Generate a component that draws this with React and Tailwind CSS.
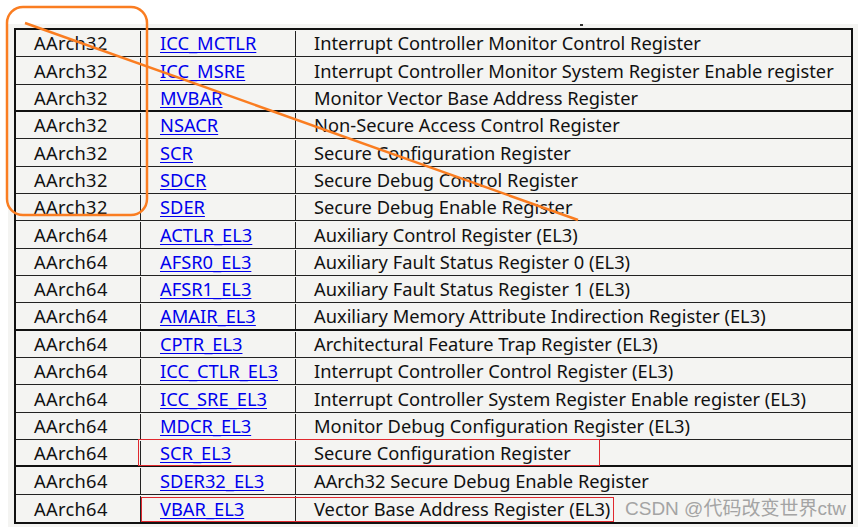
import React from "react";

const rows = [
  ["AArch32", "ICC_MCTLR", "Interrupt Controller Monitor Control Register"],
  ["AArch32", "ICC_MSRE", "Interrupt Controller Monitor System Register Enable register"],
  ["AArch32", "MVBAR", "Monitor Vector Base Address Register"],
  ["AArch32", "NSACR", "Non-Secure Access Control Register"],
  ["AArch32", "SCR", "Secure Configuration Register"],
  ["AArch32", "SDCR", "Secure Debug Control Register"],
  ["AArch32", "SDER", "Secure Debug Enable Register"],
  ["AArch64", "ACTLR_EL3", "Auxiliary Control Register (EL3)"],
  ["AArch64", "AFSR0_EL3", "Auxiliary Fault Status Register 0 (EL3)"],
  ["AArch64", "AFSR1_EL3", "Auxiliary Fault Status Register 1 (EL3)"],
  ["AArch64", "AMAIR_EL3", "Auxiliary Memory Attribute Indirection Register (EL3)"],
  ["AArch64", "CPTR_EL3", "Architectural Feature Trap Register (EL3)"],
  ["AArch64", "ICC_CTLR_EL3", "Interrupt Controller Control Register (EL3)"],
  ["AArch64", "ICC_SRE_EL3", "Interrupt Controller System Register Enable register (EL3)"],
  ["AArch64", "MDCR_EL3", "Monitor Debug Configuration Register (EL3)"],
  ["AArch64", "SCR_EL3", "Secure Configuration Register"],
  ["AArch64", "SDER32_EL3", "AArch32 Secure Debug Enable Register"],
  ["AArch64", "VBAR_EL3", "Vector Base Address Register (EL3)"],
];

const thick = new Set([2, 10, 15]);

export default function App() {
  const bounds = rows.map((_, i) => Math.round(28 + i * 27.33));
  bounds.push(520);
  return (
    <div
      className="relative w-[861px] h-[527px] bg-white overflow-hidden pl-[8px] pt-[24px]"
      style={{ fontFamily: '"Noto Sans", "Noto Sans CJK SC", sans-serif' }}
    >
      <div className="w-[850px] h-[503px] bg-[#f4f4f2] pl-[6px] pt-[4px]">
        <div className="w-[839px] border-2 border-[#111] flex flex-col">
          {rows.map((r, i) => {
            const h = bounds[i + 1] - bounds[i];
            const last = i === rows.length - 1;
            return (
              <div
                key={i}
                className={
                  "flex text-[18.3px] leading-none text-[#111] pt-[1px] " +
                  (last ? "" : thick.has(i) ? "border-b-2 border-[#111]" : "border-b border-[#222]")
                }
                style={{ height: h }}
              >
                <div className="w-[125px] shrink-0 border-r border-[#222] pl-[18px] flex items-center tracking-[0.3px]">
                  {r[0]}
                </div>
                <div className="w-[155px] shrink-0 border-r border-[#222] pl-[19px] flex items-center">
                  <span className="text-[#0000ee] underline underline-offset-2 decoration-1">{r[1]}</span>
                </div>
                <div className="flex-1 pl-[18px] flex items-center whitespace-nowrap">{r[2]}</div>
              </div>
            );
          })}
        </div>
      </div>
      {/* small tick mark */}
      <div className="absolute left-[580px] top-[24px] w-[3px] h-[2px] bg-[#333]" />
      {/* red annotation boxes */}
      <div className="absolute left-[138px] top-[439px] w-[462px] h-[27px] border border-[#e0282e]" />
      <div className="absolute left-[141px] top-[497px] w-[473px] h-[25px] border border-[#e0282e]" />
      {/* watermark */}
      <div
        className="absolute left-[625px] top-[495px] text-[19px] text-[#a4a4a4] whitespace-nowrap"
        style={{ fontFamily: '"Liberation Sans", "Noto Sans CJK SC", sans-serif' }}
      >
        CSDN @代码改变世界ctw
      </div>
      {/* orange annotations */}
      <svg className="absolute left-0 top-0 pointer-events-none" width="861" height="527">
        <rect x="7" y="7" width="140" height="208" rx="16" ry="16" fill="none" stroke="#fa7d21" strokeWidth="2.5" />
        <line x1="25" y1="23" x2="578" y2="220" stroke="#fa7d21" strokeWidth="2.5" />
      </svg>
    </div>
  );
}
